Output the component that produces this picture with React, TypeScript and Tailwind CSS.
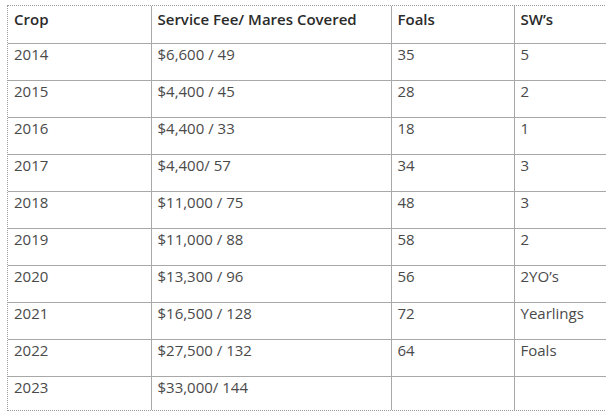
const rows: [string, string, string, string][] = [
  ['2014', '$6,600 / 49', '35', '5'],
  ['2015', '$4,400 / 45', '28', '2'],
  ['2016', '$4,400 / 33', '18', '1'],
  ['2017', '$4,400/ 57', '34', '3'],
  ['2018', '$11,000 / 75', '48', '3'],
  ['2019', '$11,000 / 88', '58', '2'],
  ['2020', '$13,300 / 96', '56', '2YO’s'],
  ['2021', '$16,500 / 128', '72', 'Yearlings'],
  ['2022', '$27,500 / 132', '64', 'Foals'],
  ['2023', '$33,000/ 144', '', ''],
];

const cell = 'align-top pl-[6px] text-left';

export default function App() {
  return (
    <div className="w-[606px] h-[417px] overflow-hidden bg-white pt-[5px] pl-[7px]">
      <div className="w-[640px] border border-dotted border-[#9a9a9a] font-['Open_Sans',sans-serif] text-[15px] leading-[17px]">
        <table className="w-full border-collapse table-fixed">
          <colgroup>
            <col className="w-[143px]" />
            <col className="w-[240px]" />
            <col className="w-[123px]" />
            <col />
          </colgroup>
          <thead>
            <tr className="h-[37px] text-[#2b2b2b] font-semibold">
              <th className={`${cell} pt-[5px] font-semibold`}>Crop</th>
              <th className={`${cell} pt-[5px] font-semibold border-l border-[#a8a8a8]`}>Service Fee/ Mares Covered</th>
              <th className={`${cell} pt-[5px] font-semibold border-l border-[#a8a8a8]`}>Foals</th>
              <th className={`${cell} pt-[5px] font-semibold border-l border-[#a8a8a8]`}>SW’s</th>
            </tr>
          </thead>
          <tbody className="text-[#4a4a4a]">
            {rows.map((r, i) => (
              <tr key={r[0]} className={i === rows.length - 1 ? 'h-[34px]' : 'h-[37px]'}>
                <td className={`${cell} pt-[2px] border-t border-[#a8a8a8]`}>{r[0]}</td>
                <td className={`${cell} pt-[2px] border-t border-l border-[#a8a8a8]`}>{r[1]}</td>
                <td className={`${cell} pt-[2px] border-t border-l border-[#a8a8a8]`}>{r[2]}</td>
                <td className={`${cell} pt-[2px] border-t border-l border-[#a8a8a8]`}>{r[3]}</td>
              </tr>
            ))}
          </tbody>
        </table>
      </div>
    </div>
  );
}
